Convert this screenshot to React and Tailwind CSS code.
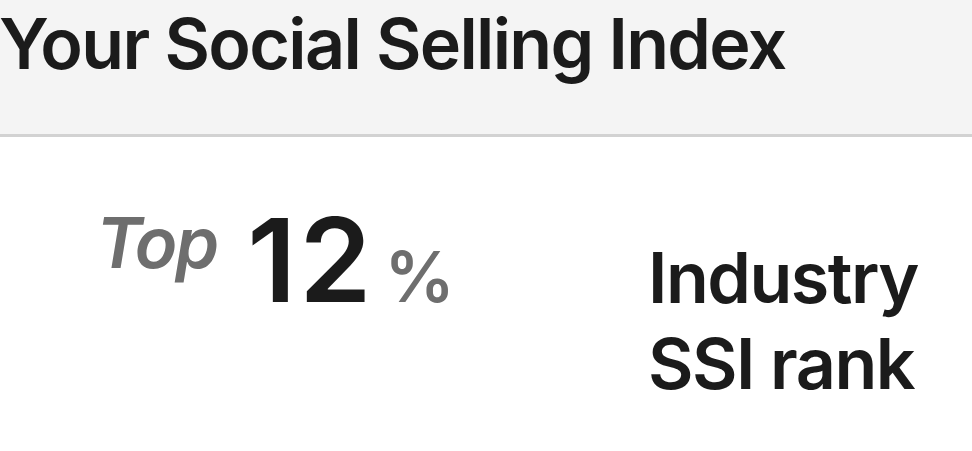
import React from "react";

export default function App() {
  return (
    <div className="w-[972px] h-[451px] bg-white overflow-hidden" style={{ fontFamily: "Inter, 'Noto Sans', sans-serif" }}>
      <div className="h-[137px] bg-[#f4f4f4] border-b-[3px] border-[#d2d2d2] flex items-start">
        <h1 className="text-[70px] leading-[84px] font-semibold text-[#1b1b1b] tracking-[-1.7px] mt-[2px] -ml-[1px] whitespace-nowrap">
          Your Social Selling Index
        </h1>
      </div>
      <div className="flex items-start pt-[60px]">
        <div className="flex items-baseline pl-[96px] mt-[5px] text-[#1b1b1b]">
          <span className="italic font-semibold text-[70px] tracking-[-2px] text-[#6e6e6e] relative -top-[34px] mr-[30px]">Top</span>
          <span className="font-semibold text-[116px] leading-none tracking-[3px]">12</span>
          <span className="font-semibold text-[70px] text-[#6e6e6e] ml-[10px]">%</span>
        </div>
        <div className="ml-auto mr-[54px] mt-[38px] text-[70px] leading-[86px] font-semibold text-[#1b1b1b] tracking-[-1.5px]">
          <div>Industry</div>
          <div>SSI rank</div>
        </div>
      </div>
    </div>
  );
}
